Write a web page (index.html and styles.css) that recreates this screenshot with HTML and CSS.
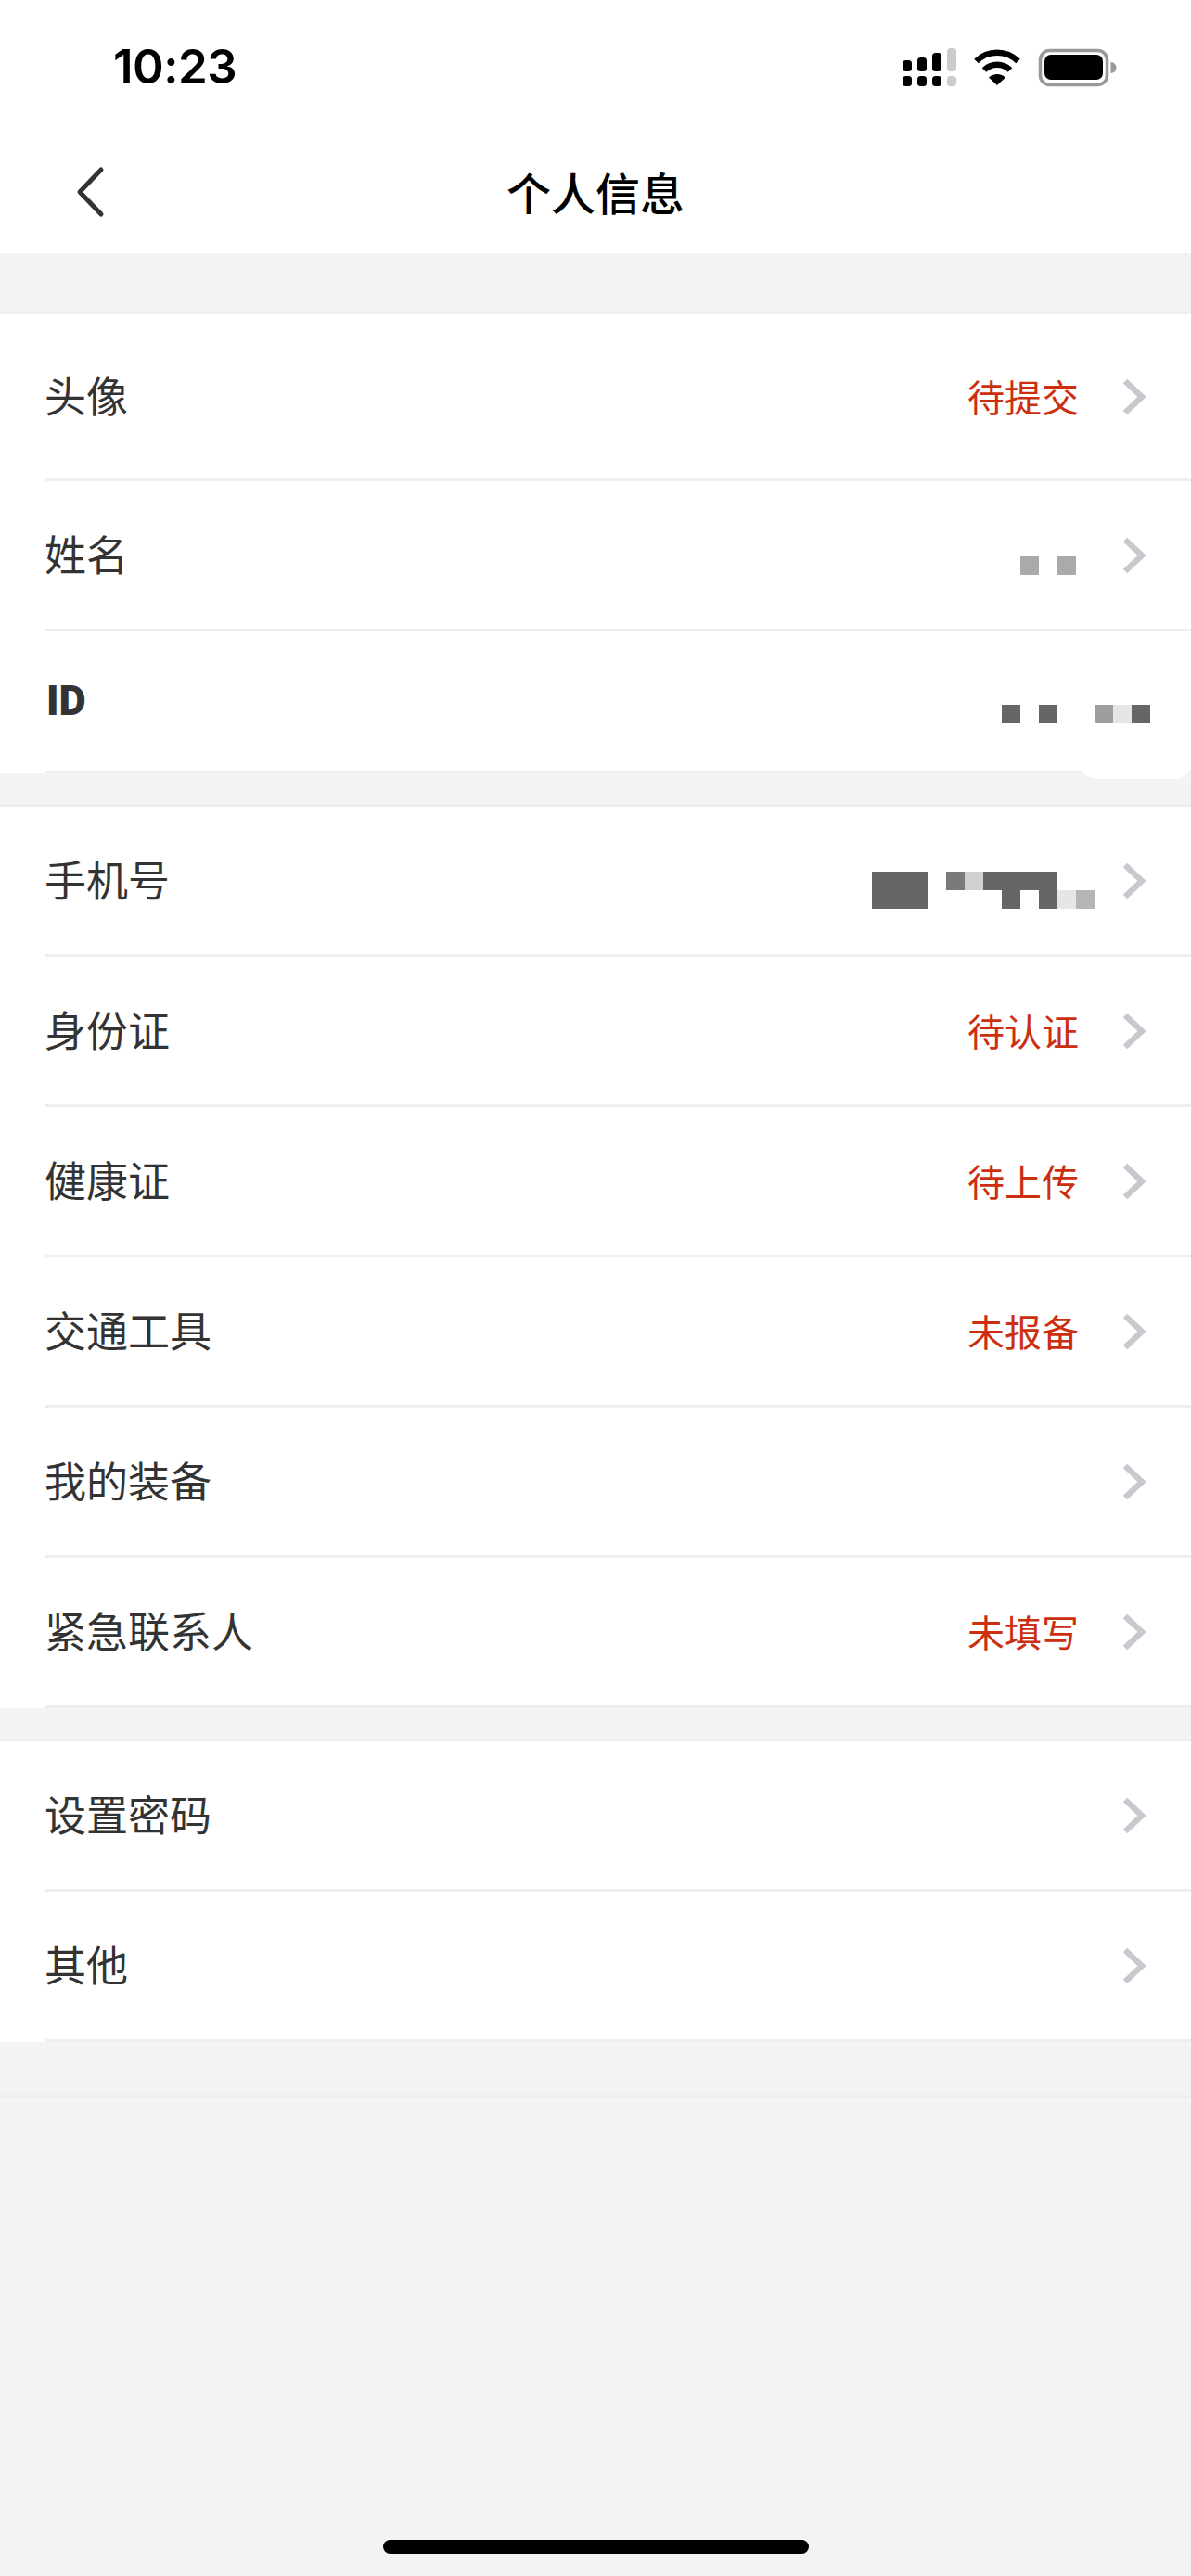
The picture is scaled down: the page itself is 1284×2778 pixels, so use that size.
FILE: index.html
```html
<!DOCTYPE html>
<html lang="zh-CN">
<head>
<meta charset="utf-8">
<title>个人信息</title>
<link rel="stylesheet" href="styles.css">
</head>
<body>
<div class="app">
  <header class="header">
    <div class="status">
      <span class="time">10:23</span>
      <svg class="status-icons" width="229" height="41" viewBox="973 52 229 41">
        <g fill="#000">
          <rect x="973" y="65" width="10" height="12" rx="3.5"/>
          <rect x="989" y="62" width="10" height="15" rx="3.5"/>
          <rect x="1005" y="57" width="10" height="20" rx="3.5"/>
          <rect x="973" y="82" width="10" height="11" rx="3.5"/>
          <rect x="989" y="82" width="10" height="11" rx="3.5"/>
          <rect x="1005" y="82" width="10" height="11" rx="3.5"/>
        </g>
        <g fill="#cbcbcb">
          <rect x="1021" y="52" width="10" height="25" rx="3.5"/>
          <rect x="1021" y="82" width="10" height="11" rx="3.5"/>
        </g>
        <g fill="none" stroke="#000" stroke-width="6.5">
          <path d="M1052.5 66a32 32 0 0 1 45 0"/>
          <path d="M1061 75.5a20 20 0 0 1 28 0"/>
        </g>
        <path d="M1066 83.500a13 13 0 0 1 18 0L1075 92z" fill="#000"/>
        <rect x="1121.500" y="54.500" width="72" height="37" rx="10" fill="none" stroke="#999" stroke-width="3.500"/>
        <rect x="1126" y="59" width="63" height="27" rx="7" fill="#000"/>
        <path d="M1197.500 67a6 6 0 0 1 0 12z" fill="#999"/>
      </svg>
    </div>
    <nav class="nav">
      <svg class="back" width="40" height="60" viewBox="0 0 40 60">
        <path d="M27 6L4 30l23 24" fill="none" stroke="#333" stroke-width="5" stroke-linecap="round" stroke-linejoin="round"/>
      </svg>
      <h1 class="title">个人信息</h1>
    </nav>
  </header>

  <section class="group">
    <div class="row row-tall">
      <span class="label">头像</span>
      <span class="value">待提交</span>
      <svg class="chev" viewBox="0 0 26 40"><path d="M3 3l18 17L3 37" /></svg>
    </div>
    <div class="row">
      <span class="label">姓名</span>
      <div class="mosaic mosaic-name">
        <i class="c c-a"></i><i class="c"></i><i class="c c-a"></i>
      </div>
      <svg class="chev" viewBox="0 0 26 40"><path d="M3 3l18 17L3 37" /></svg>
    </div>
    <div class="row row-id">
      <span class="label label-id">ID</span>
      <div class="mosaic mosaic-id">
        <i class="c c-d"></i><i class="c"></i><i class="c c-d"></i><i class="c"></i><i class="c"></i><i class="c c-m"></i><i class="c c-l"></i><i class="c c-d"></i>
      </div>
      <div class="patch"></div>
    </div>
  </section>

  <section class="group">
    <div class="row">
      <span class="label">手机号</span>
      <div class="mosaic mosaic-phone">
        <i class="c c-d"></i><i class="c c-d"></i><i class="c c-d"></i><i class="c"></i><i class="c c-g"></i><i class="c c-s"></i><i class="c c-d"></i><i class="c c-d"></i><i class="c c-d"></i><i class="c c-d"></i><i class="c"></i><i class="c"></i>
        <i class="c c-d"></i><i class="c c-d"></i><i class="c c-d"></i><i class="c"></i><i class="c"></i><i class="c"></i><i class="c"></i><i class="c c-d"></i><i class="c"></i><i class="c c-d"></i><i class="c c-l"></i><i class="c c-b"></i>
      </div>
      <svg class="chev" viewBox="0 0 26 40"><path d="M3 3l18 17L3 37" /></svg>
    </div>
    <div class="row">
      <span class="label">身份证</span>
      <span class="value">待认证</span>
      <svg class="chev" viewBox="0 0 26 40"><path d="M3 3l18 17L3 37" /></svg>
    </div>
    <div class="row">
      <span class="label">健康证</span>
      <span class="value">待上传</span>
      <svg class="chev" viewBox="0 0 26 40"><path d="M3 3l18 17L3 37" /></svg>
    </div>
    <div class="row">
      <span class="label">交通工具</span>
      <span class="value">未报备</span>
      <svg class="chev" viewBox="0 0 26 40"><path d="M3 3l18 17L3 37" /></svg>
    </div>
    <div class="row">
      <span class="label">我的装备</span>
      <svg class="chev" viewBox="0 0 26 40"><path d="M3 3l18 17L3 37" /></svg>
    </div>
    <div class="row">
      <span class="label">紧急联系人</span>
      <span class="value">未填写</span>
      <svg class="chev" viewBox="0 0 26 40"><path d="M3 3l18 17L3 37" /></svg>
    </div>
  </section>

  <section class="group">
    <div class="row">
      <span class="label">设置密码</span>
      <svg class="chev" viewBox="0 0 26 40"><path d="M3 3l18 17L3 37" /></svg>
    </div>
    <div class="row">
      <span class="label">其他</span>
      <svg class="chev" viewBox="0 0 26 40"><path d="M3 3l18 17L3 37" /></svg>
    </div>
  </section>

  <div class="end-line"></div>
  <div class="home-indicator"></div>
</div>
</body>
</html>
```

FILE: styles.css
```css
* { box-sizing: border-box; }

html, body {
  margin: 0;
  padding: 0;
}

body {
  background: #f3f3f3;
  font-family: "Noto Sans CJK SC", "Noto Sans", sans-serif;
}

.app {
  position: relative;
  width: 1284px;
  height: 2778px;
  overflow: hidden;
  background: #f3f3f3;
}

.header {
  height: 273px;
  background: #fff;
}

.status {
  height: 141px;
  display: flex;
  align-items: flex-start;
  justify-content: space-between;
  padding: 52px 82px 0 122px;
}

.time {
  font-family: Inter, "Liberation Sans", sans-serif;
  font-weight: 600;
  font-size: 51px;
  line-height: 40px;
  letter-spacing: -0.5px;
  color: #000;
}

.status-icons {
  display: block;
  overflow: visible;
}

.nav {
  position: relative;
  height: 132px;
  display: flex;
  align-items: center;
  justify-content: center;
}

.back {
  position: absolute;
  left: 82px;
  top: 36px;
}

.title {
  margin: 0 0 3px;
  font-size: 48px;
  line-height: 66px;
  font-weight: 500;
  color: #000;
}

.group {
  margin-top: 33px;
  background: #fff;
  border-top: 3px solid #eee;
}

.header + .group {
  margin-top: 63px;
}

.row {
  position: relative;
  height: 162px;
  margin-left: 48px;
  padding: 0 48px 0 0;
  display: flex;
  align-items: center;
  border-bottom: 3px solid #eee;
}

.group > .row-tall {
  height: 180px;
}

.row-id {
  height: 153px;
  align-items: flex-start;
}

.label {
  padding-bottom: 4px;
  font-size: 45px;
  line-height: 60px;
  color: #333;
}

.label-id {
  margin-top: 45px;
  margin-left: 2px;
  padding-bottom: 0;
  font-family: Roboto, "Noto Sans", sans-serif;
  font-weight: 900;
}

.value {
  margin-left: auto;
  margin-right: 47px;
  padding-bottom: 1px;
  font-size: 40px;
  line-height: 54px;
  color: #cc2f10;
}

.chev {
  display: block;
  flex: none;
  width: 26px;
  height: 40px;
}

.label + .chev {
  margin-left: auto;
}

.chev path {
  fill: none;
  stroke: #c8c8ce;
  stroke-width: 6.5;
}

.mosaic {
  display: grid;
  grid-auto-rows: 20px;
  grid-template-columns: repeat(auto-fill, 20px);
  margin-left: auto;
}

.c {
  display: block;
  width: 20px;
  height: 20px;
}

.c-d { background: #666; }
.c-a { background: #aaa; }
.c-m { background: #9e9e9e; }
.c-l { background: #e6e6e6; }
.c-g { background: #7a7a7a; }
.c-s { background: #d0d0d0; }
.c-b { background: #b5b5b5; }

.mosaic-name {
  width: 60px;
  margin-top: 23px;
  margin-right: 50px;
}

.mosaic-id {
  width: 160px;
  margin-top: 79px;
  margin-right: -4px;
}

.mosaic-phone {
  width: 240px;
  margin-top: 21px;
  margin-right: 30px;
}

.patch {
  position: absolute;
  right: 0;
  bottom: -9px;
  width: 124px;
  height: 30px;
  background: #fff;
  border-radius: 0 0 16px 24px;
}

.end-line {
  height: 3px;
  margin-top: 57px;
  background: #eee;
}

.home-indicator {
  position: absolute;
  left: 413px;
  top: 2739px;
  width: 459px;
  height: 15px;
  border-radius: 8px;
  background: #000;
}
```
